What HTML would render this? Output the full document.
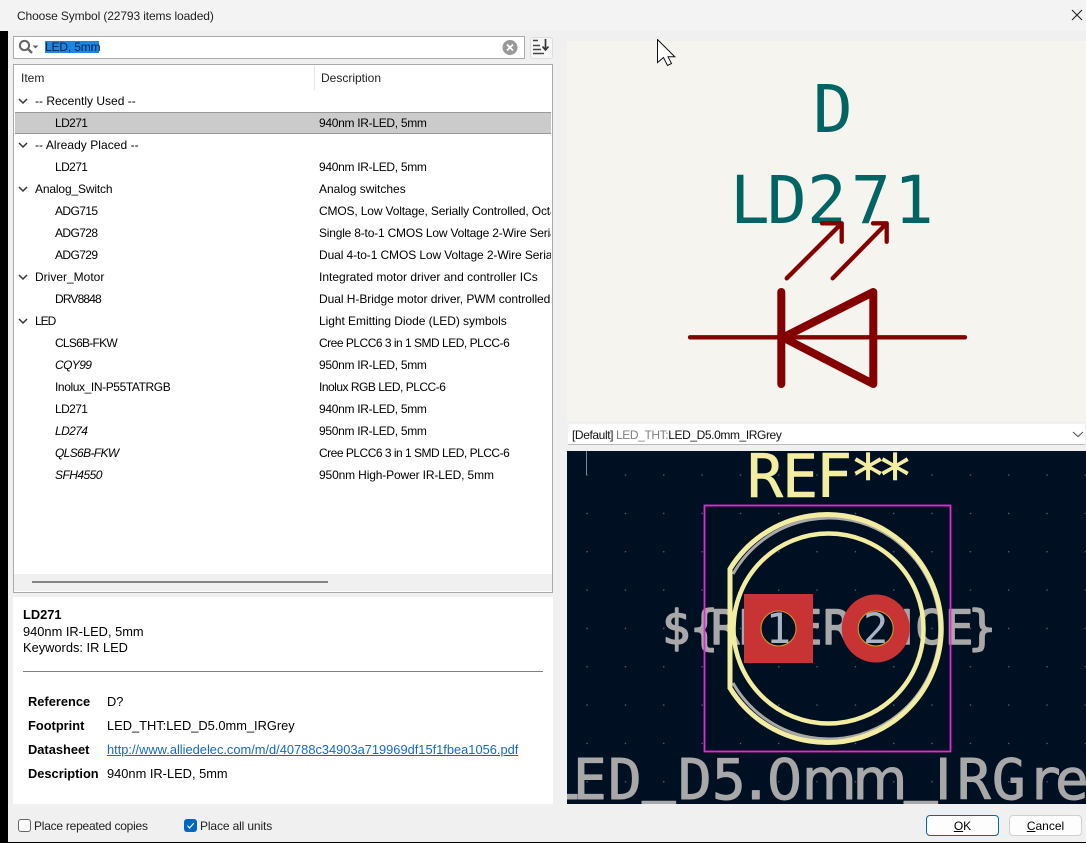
<!DOCTYPE html>
<html><head><meta charset="utf-8"><style>
html,body{margin:0;padding:0}
body{width:1086px;height:843px;position:relative;overflow:hidden;background:#f0f0f0;font-family:"Liberation Sans",sans-serif;font-size:12px;color:#000}
.a{position:absolute}
.t{position:absolute;white-space:nowrap;line-height:16px;height:16px}
.d{left:319px;width:232px;overflow:hidden}
.i{font-style:italic}
.b{font-weight:bold}
.f{font-size:12.85px}
svg{position:absolute;overflow:hidden}
svg text{font-family:"DejaVu Sans Mono",monospace;stroke-linejoin:round}
svg tspan.s{font-family:"DejaVu Sans",sans-serif}
</style></head><body>
<div class="a" style="left:0;top:0;width:1086px;height:31px;background:#f3f3f3"></div>
<div class="t" style="left:17px;top:8px;color:#222;letter-spacing:-.12px">Choose Symbol (22793 items loaded)</div>
<svg style="left:1070px;top:8px" width="14" height="14"><path d="M2 2L12 12M12 2L2 12" stroke="#222" stroke-width="1.1" fill="none"/></svg>
<div class="a" style="left:0;top:31px;width:8px;height:812px;background:#000"></div>
<div class="a" style="left:8px;top:842px;width:1078px;height:1px;background:#000"></div>

<div class="a" style="left:13px;top:36px;width:510px;height:21px;background:#fff;border:1px solid #aaa"></div>
<svg style="left:17px;top:39px" width="24" height="17"><circle cx="7.5" cy="6.5" r="4.6" fill="none" stroke="#666" stroke-width="2"/><path d="M11 10L15 14" stroke="#666" stroke-width="2.4"/><path d="M15.5 6.5h6l-3 3z" fill="#666"/></svg>
<div class="t" style="left:45px;top:41px;width:54px;height:12px;background:#1e86e0;color:#06224a;line-height:12px;letter-spacing:-.15px">LED, 5mm</div>
<svg style="left:502px;top:40px" width="16" height="16"><circle cx="8" cy="7.5" r="7.5" fill="#999"/><path d="M5 4.5L11 10.5M11 4.5L5 10.5" stroke="#fff" stroke-width="1.7"/></svg>
<div class="a" style="left:530px;top:37px;width:21px;height:20px;background:#f6f6f6;border:1px solid #ddd;border-radius:3px"></div>
<svg style="left:532px;top:38px" width="20" height="18"><path d="M1 2.500h5M1 7.500h7M1 11.500h8M1 15.500h11" stroke="#444" stroke-width="1.600" fill="none"/><path d="M13.500 1v11M10.500 8.500L13.500 12L16.500 8.500" stroke="#333" stroke-width="1.700" fill="none"/></svg>

<div class="a" style="left:13px;top:64px;width:538px;height:527px;background:#fff;border:1px solid #aaa"></div>
<div class="t" style="left:21px;top:70px;color:#222">Item</div>
<div class="a" style="left:314px;top:66px;width:1px;height:24px;background:#e5e5e5"></div>
<div class="t" style="left:321px;top:70px;color:#222">Description</div>
<div class="a" style="left:15px;top:112px;width:536px;height:20px;background:#cbcbcb;border-top:1px solid #999;border-bottom:1px solid #999"></div>

<svg style="left:16px;top:93px" width="14" height="236" fill="none" stroke="#333" stroke-width="1.5"><path d="M3 6l4 4 4-4M3 50l4 4 4-4M3 94l4 4 4-4M3 182l4 4 4-4M3 226l4 4 4-4"/></svg>

<div class="t" style="left:35px;top:93px">-- Recently Used --</div>
<div class="t" style="left:55px;top:115px;letter-spacing:-.6px">LD271</div><div class="t d" style="top:115px;letter-spacing:-.3px">940nm IR-LED, 5mm</div>
<div class="t" style="left:35px;top:137px;letter-spacing:.05px">-- Already Placed --</div>
<div class="t" style="left:55px;top:159px;letter-spacing:-.6px">LD271</div><div class="t d" style="top:159px;letter-spacing:-.3px">940nm IR-LED, 5mm</div>
<div class="t" style="left:35px;top:181px;letter-spacing:-.15px">Analog_Switch</div><div class="t d" style="top:181px">Analog switches</div>
<div class="t" style="left:55px;top:203px;letter-spacing:-.6px">ADG715</div><div class="t d" style="top:203px;letter-spacing:-.15px">CMOS, Low Voltage, Serially Controlled, Octal SPST Switches</div>
<div class="t" style="left:55px;top:225px;letter-spacing:-.6px">ADG728</div><div class="t d" style="top:225px;letter-spacing:-.2px">Single 8-to-1 CMOS Low Voltage 2-Wire Serial Multiplexer</div>
<div class="t" style="left:55px;top:247px;letter-spacing:-.6px">ADG729</div><div class="t d" style="top:247px;letter-spacing:-.1px">Dual 4-to-1 CMOS Low Voltage 2-Wire Serial Multiplexer</div>
<div class="t" style="left:35px;top:269px">Driver_Motor</div><div class="t d" style="top:269px">Integrated motor driver and controller ICs</div>
<div class="t" style="left:55px;top:291px;letter-spacing:-.85px">DRV8848</div><div class="t d" style="top:291px;letter-spacing:-.05px">Dual H-Bridge motor driver, PWM controlled interface</div>
<div class="t" style="left:35px;top:313px;letter-spacing:-1px">LED</div><div class="t d" style="top:313px;letter-spacing:-.05px">Light Emitting Diode (LED) symbols</div>
<div class="t" style="left:55px;top:335px;letter-spacing:-.75px">CLS6B-FKW</div><div class="t d" style="top:335px;letter-spacing:-.5px">Cree PLCC6 3 in 1 SMD LED, PLCC-6</div>
<div class="t i" style="left:55px;top:357px;letter-spacing:-.6px">CQY99</div><div class="t d" style="top:357px;letter-spacing:-.3px">950nm IR-LED, 5mm</div>
<div class="t" style="left:55px;top:379px;letter-spacing:-.4px">Inolux_IN-P55TATRGB</div><div class="t d" style="top:379px;letter-spacing:-.5px">Inolux RGB LED, PLCC-6</div>
<div class="t" style="left:55px;top:401px;letter-spacing:-.6px">LD271</div><div class="t d" style="top:401px;letter-spacing:-.3px">940nm IR-LED, 5mm</div>
<div class="t i" style="left:55px;top:423px;letter-spacing:-.6px">LD274</div><div class="t d" style="top:423px;letter-spacing:-.3px">950nm IR-LED, 5mm</div>
<div class="t i" style="left:55px;top:445px;letter-spacing:-.65px">QLS6B-FKW</div><div class="t d" style="top:445px;letter-spacing:-.5px">Cree PLCC6 3 in 1 SMD LED, PLCC-6</div>
<div class="t i" style="left:55px;top:467px;letter-spacing:-.55px">SFH4550</div><div class="t d" style="top:467px;letter-spacing:-.14px">950nm High-Power IR-LED, 5mm</div>

<div class="a" style="left:14px;top:574px;width:538px;height:17px;background:#f0f0f0"></div>
<div class="a" style="left:32px;top:581px;width:296px;height:2px;background:#858585"></div>

<div class="a" style="left:13px;top:597px;width:540px;height:207px;background:#fff"></div>
<div class="t f b" style="left:23px;top:607px">LD271</div>
<div class="t f" style="left:23px;top:624px">940nm IR-LED, 5mm</div>
<div class="t f" style="left:23px;top:640px">Keywords: IR LED</div>
<div class="a" style="left:23px;top:671px;width:520px;height:1px;background:#808080"></div>
<div class="t f b" style="left:28px;top:694px">Reference</div><div class="t f" style="left:107px;top:694px">D?</div>
<div class="t f b" style="left:28px;top:718px">Footprint</div><div class="t f" style="left:107px;top:718px">LED_THT:LED_D5.0mm_IRGrey</div>
<div class="t f b" style="left:28px;top:742px">Datasheet</div><div class="t f" style="left:107px;top:742px;color:#1668c8;text-decoration:underline">http://www.alliedelec.com/m/d/40788c34903a719969df15f1fbea1056.pdf</div>
<div class="t f b" style="left:28px;top:766px">Description</div><div class="t f" style="left:107px;top:766px">940nm IR-LED, 5mm</div>

<div class="a" style="left:18px;top:819px;width:11px;height:11px;background:#fbfbfb;border:1px solid #666;border-radius:3px"></div>
<div class="t" style="left:34px;top:818px;color:#222;letter-spacing:-.24px">Place repeated copies</div>
<svg style="left:184px;top:819px" width="14" height="14"><rect width="13" height="13" rx="3" fill="#0067c0"/><path d="M3.500 6.800L5.500 9L9.800 4.300" stroke="#fff" stroke-width="1.100" fill="none"/></svg>
<div class="t" style="left:200px;top:818px;color:#222;letter-spacing:-.13px">Place all units</div>

<div class="a" style="left:926px;top:815px;width:71px;height:19px;background:#fdfdfd;border:1px solid #0067c0;border-radius:4px;text-align:center;line-height:20px"><u>O</u>K</div>
<div class="a" style="left:1009px;top:815px;width:71px;height:19px;background:#fdfdfd;border:1px solid #d0d0d0;border-radius:4px;text-align:center;line-height:20px"><u>C</u>ancel</div>

<svg style="left:567px;top:41px" width="519" height="380" viewBox="567 41 519 380">
<rect x="567" y="41" width="519" height="380" fill="#f5f4ef"/>
<text x="813" y="132" font-size="66" fill="#006464">D</text>
<text x="730 767 807 851 894" y="223" font-size="66" fill="#006464">LD271</text>
<g fill="none" stroke="#840000" stroke-linecap="round" stroke-linejoin="round">
<path stroke-width="4.300" d="M786.700 278.300L841.700 223.300M822 223.300H841.700V241.700M832.700 278.300L886.700 223.300M873 223.300H886.700V241.700M690 337.300H965"/>
<path stroke-width="8" d="M781.300 292V384M873.300 292V384L783 337.500Z"/>
</g>
</svg>
<svg style="left:657px;top:39px" width="20" height="28"><path d="M0.500 0.500V23.500L6.500 18.500L10.500 26.500L14.500 24.500L11 17.800H17.800Z" fill="#fff" stroke="#111" stroke-width="1"/></svg>

<div class="a" style="left:568px;top:424px;width:517px;height:20px;background:#fff;border-bottom:1px solid #bbb"></div>
<div class="t" style="left:572px;top:427px;color:#111;letter-spacing:-.4px">[Default] <span style="color:#808080">LED_THT:</span>LED_D5.0mm_IRGrey</div>
<svg style="left:1071px;top:430px" width="14" height="9"><path d="M2 2l5 4.500 5-4.500" fill="none" stroke="#555" stroke-width="1.100"/></svg>

<svg style="left:567px;top:451px" width="519" height="353" viewBox="567 451 519 353">
<defs><pattern id="g" x="586.500" y="474.500" width="38.330" height="38.330" patternUnits="userSpaceOnUse"><rect width="1.200" height="1.200" fill="#6a7480"/></pattern></defs>
<rect x="567" y="451" width="519" height="353" fill="#001023"/>
<rect x="567" y="451" width="519" height="353" fill="url(#g)"/>
<path d="M586.500 451V475" stroke="#7d8794" stroke-width="1"/>
<text x="662 690 711 738 765 794 823 854 884 915 945 968" y="644" font-size="47" fill="#a8a8a8" stroke="#a8a8a8" stroke-width="1.500">${REFERENCE}</text>
<text y="799" font-size="56" fill="#a8a8a8" stroke="#a8a8a8" stroke-width="1"><tspan x="546 573 608">LED</tspan><tspan x="642" dy="-9">_</tspan><tspan x="678 712 739" dy="9">D5.</tspan><tspan class="s" x="766.700">0</tspan><tspan class="s" x="802">m</tspan><tspan class="s" x="852.700">m</tspan><tspan x="904" dy="-9">_</tspan><tspan class="s" x="935" dy="9">I</tspan><tspan x="957 992 1027 1055 1090">RGrey</tspan></text>
<text x="747 782 816 850 877" y="497" font-size="60" fill="#f2eda1" stroke="#f2eda1" stroke-width=".6">REF**</text>
<path d="M733 574A110.500 110.500 0 1 1 733 683" fill="none" stroke="#a8a8a8" stroke-width="3"/>
<rect x="744" y="594" width="69" height="69" fill="#c83434"/>
<circle cx="875.700" cy="628.500" r="34" fill="#c83434"/>
<circle cx="778.500" cy="628.500" r="17.500" fill="#001023" stroke="#d8a022" stroke-width="1"/>
<circle cx="875.700" cy="628.500" r="17.500" fill="#001023" stroke="#d8a022" stroke-width="1"/>
<text x="778.500" y="643" font-size="42" fill="#a9b3c4" text-anchor="middle">1</text>
<text x="875.700" y="643" font-size="42" fill="#a9b3c4" text-anchor="middle">2</text>
<g fill="none" stroke="#f2eda1">
<circle cx="828.500" cy="628.500" r="95" stroke-width="4.500"/>
<path d="M730 569A114 114 0 1 1 730 688Z" stroke-width="5"/>
</g>
<rect x="704.500" y="505.500" width="246" height="246" fill="none" stroke="#e62ad0" stroke-width="1.800"/>
</svg>
</body></html>
